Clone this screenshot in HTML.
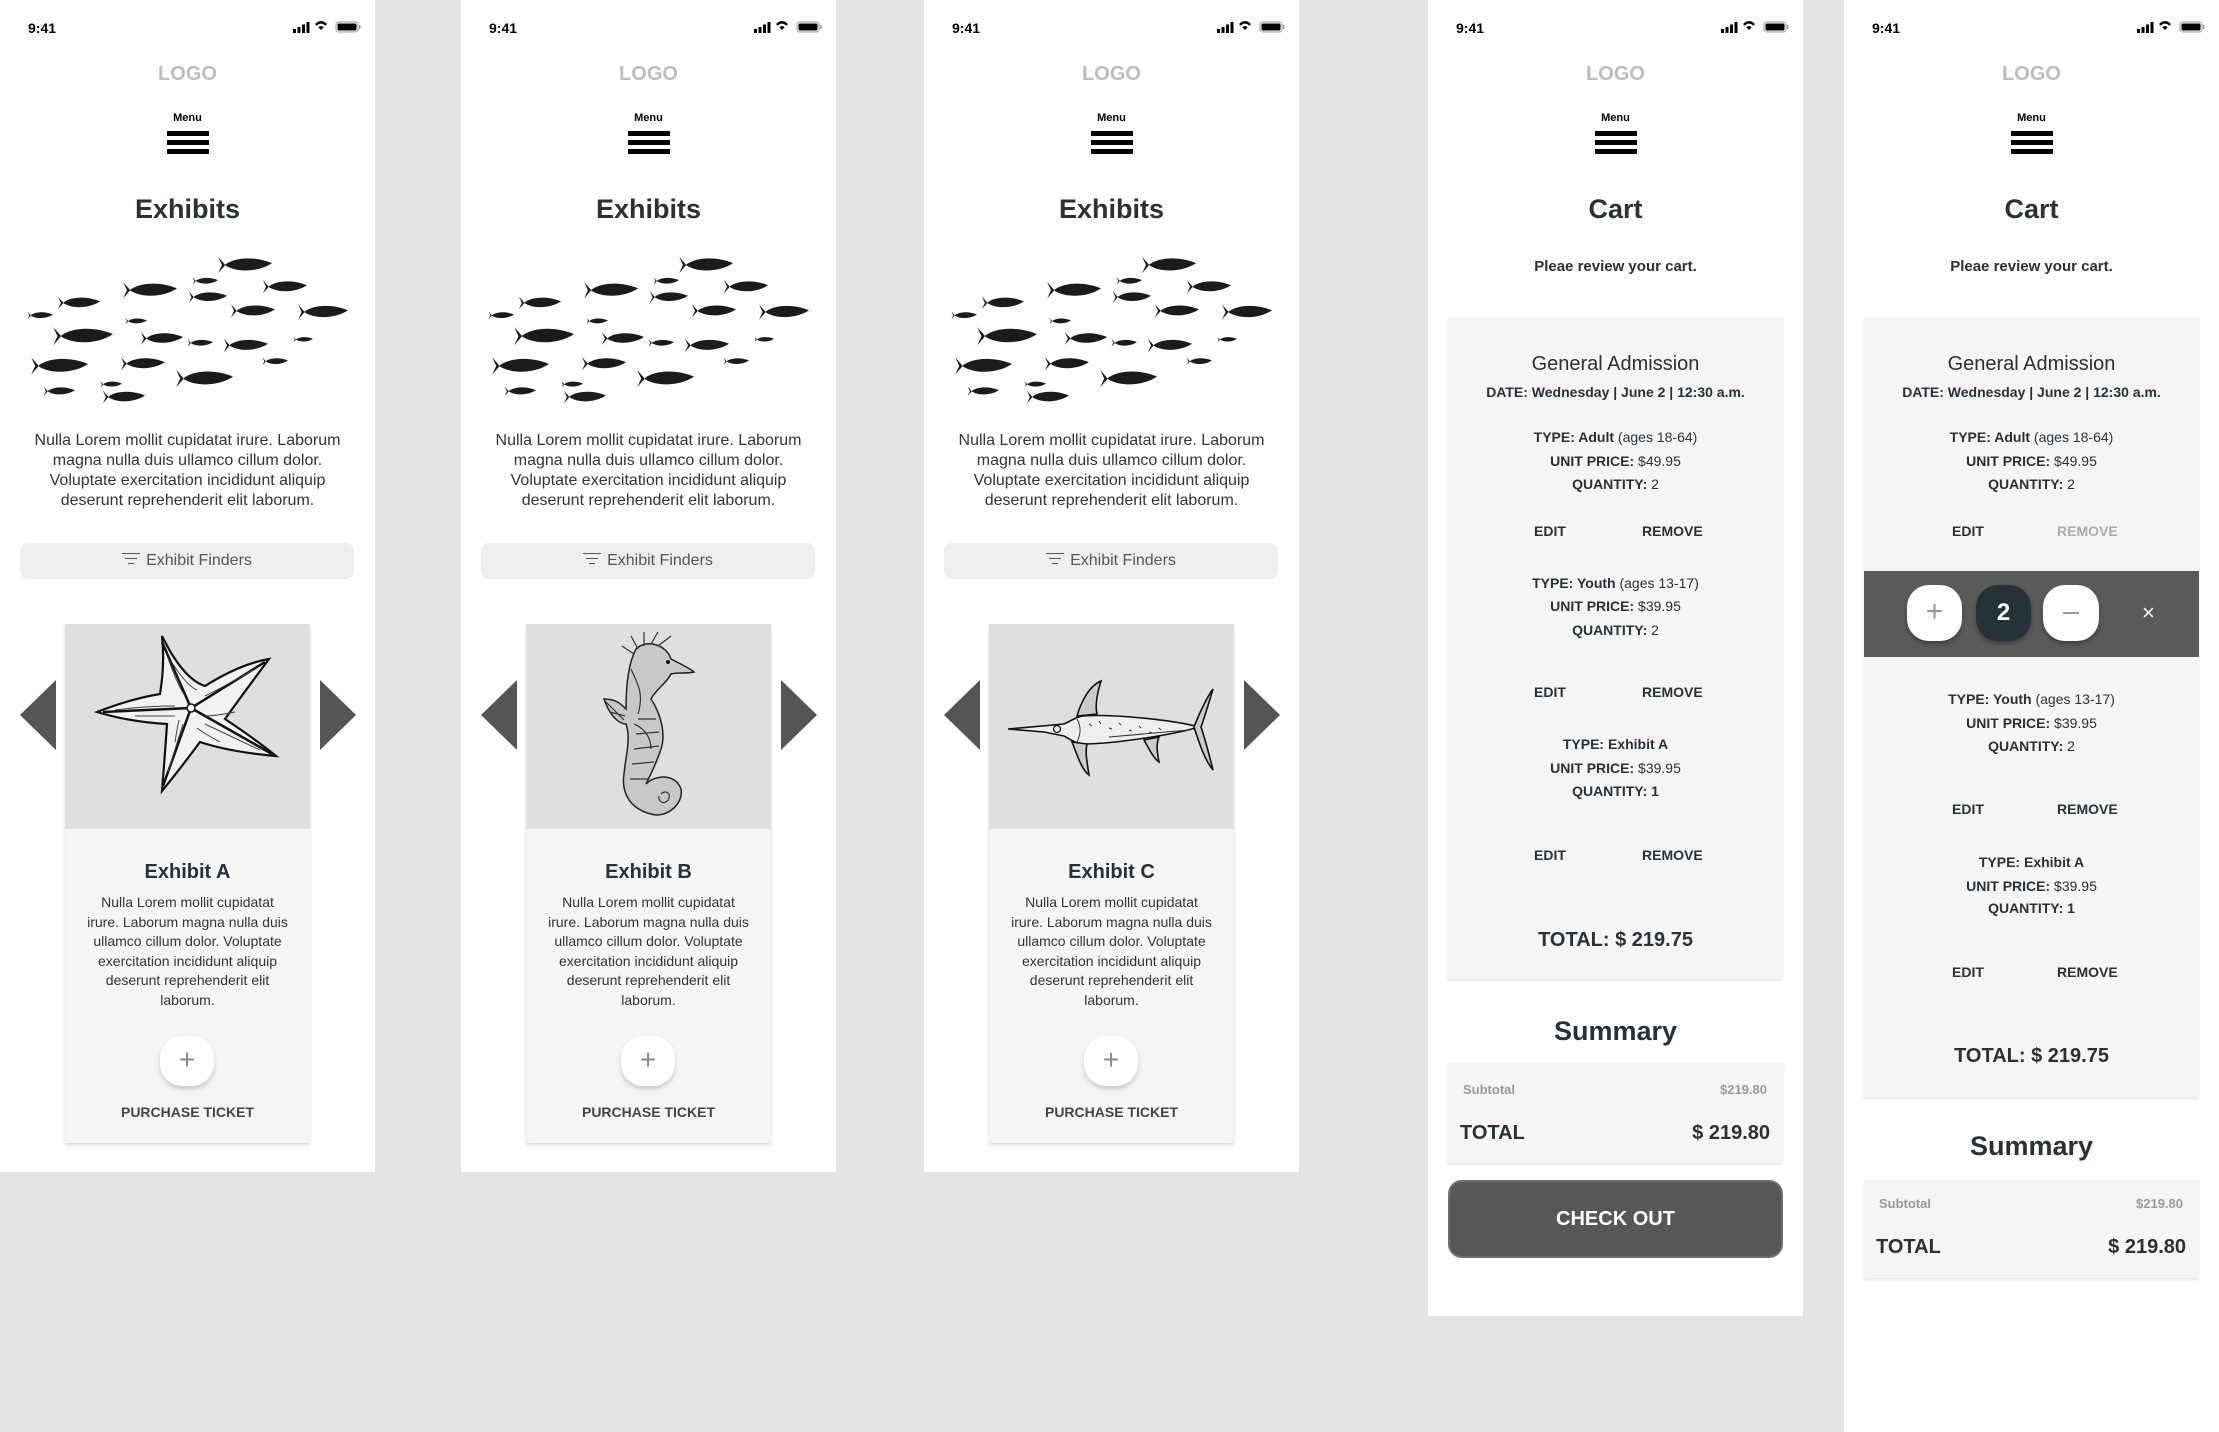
<!DOCTYPE html>
<html><head><meta charset="utf-8"><style>
*{margin:0;padding:0;box-sizing:border-box}
body{width:2219px;height:1432px;background:#e4e4e4;position:relative;overflow:hidden;font-family:"Liberation Sans",sans-serif;color:#263238}
.ph{position:absolute;top:0;width:375px;background:#fff;overflow:hidden}
.a{position:absolute}
.c{position:absolute;left:0;width:375px;text-align:center;white-space:nowrap}
.time{position:absolute;left:28px;top:20px;font-size:14px;font-weight:bold;color:#000;line-height:16px}
.logo{top:62px;font-size:20px;font-weight:bold;color:#bdbdbd;line-height:24px}
.menu{top:112px;font-size:11px;font-weight:bold;color:#000;line-height:13px}
.hb{position:absolute;left:167px;width:42px;height:5px;background:#000}
.h1{top:193px;font-size:27px;font-weight:bold;line-height:32px}
.para{top:431px;font-size:16px;line-height:20px;color:#333}
.find{position:absolute;left:20px;top:543px;width:334px;height:36px;background:#eee;border-radius:8px;font-size:16px;color:#555;text-align:center;line-height:36px}
.card{position:absolute;left:65px;top:624px;width:245px;height:519px;background:#f5f5f5;box-shadow:0 2px 3px rgba(0,0,0,.15)}
.img{position:absolute;left:0;top:0;width:245px;height:205px;background:#dfdfdf}
.ct{position:absolute;left:0;width:245px;text-align:center}
.plus{position:absolute;left:95px;top:412px;width:54px;height:50px;background:#fff;border-radius:22px;box-shadow:0 3px 5px rgba(0,0,0,.18);font-size:28px;color:#888;text-align:center;line-height:48px;font-weight:300}
.arL{position:absolute;left:20px;top:680px;width:0;height:0;border-top:35px solid transparent;border-bottom:35px solid transparent;border-right:36px solid #555}
.arR{position:absolute;left:320px;top:680px;width:0;height:0;border-top:35px solid transparent;border-bottom:35px solid transparent;border-left:36px solid #555}
.box{position:absolute;left:20px;width:335px;background:#f5f5f5;box-shadow:0 2px 3px rgba(0,0,0,.1)}
.s14{font-size:14px;line-height:18px;color:#263238}
.b{font-weight:bold}
.er{position:absolute;font-size:14px;font-weight:bold;line-height:18px;color:#263238}
</style></head><body>
<svg width="0" height="0" style="position:absolute">
<defs>
<symbol id="fish" viewBox="0 0 100 30" preserveAspectRatio="none"><path d="M14,15 C32,2 70,1 100,12 C76,26 36,28 14,15Z M15,15 L2,2 L9,15 L2,28Z" fill="#1c1a1a"/></symbol>
<symbol id="school" viewBox="0 215 375 135" preserveAspectRatio="none">
<use href="#fish" x="217" y="219.8" width="55" height="16.5"/><use href="#fish" x="192" y="238.1" width="26" height="7.8"/><use href="#fish" x="262" y="240.3" width="45" height="13.5"/><use href="#fish" x="122" y="241.8" width="55" height="16.5"/><use href="#fish" x="188" y="250.2" width="39" height="11.7"/><use href="#fish" x="57" y="254.6" width="43" height="12.9"/><use href="#fish" x="27" y="268.1" width="26" height="7.8"/><use href="#fish" x="230" y="261.3" width="45" height="13.5"/><use href="#fish" x="297" y="261.4" width="51" height="15.3"/><use href="#fish" x="125" y="273.7" width="22" height="6.6"/><use href="#fish" x="52" y="280.9" width="61" height="18.3"/><use href="#fish" x="140" y="285.6" width="43" height="12.9"/><use href="#fish" x="187" y="292.1" width="26" height="7.8"/><use href="#fish" x="223" y="291.3" width="45" height="13.5"/><use href="#fish" x="293" y="290" width="20" height="6"/><use href="#fish" x="30" y="307.3" width="58" height="17.4"/><use href="#fish" x="120" y="307.3" width="45" height="13.5"/><use href="#fish" x="262" y="308.1" width="26" height="7.8"/><use href="#fish" x="175" y="318.3" width="58" height="17.4"/><use href="#fish" x="43" y="333.2" width="32" height="9.6"/><use href="#fish" x="100" y="328.7" width="22" height="6.6"/><use href="#fish" x="102" y="336.6" width="43" height="12.9"/>
</symbol>
<symbol id="status" viewBox="0 0 72 18"><rect x="3" y="11" width="3" height="4" fill="#000"/><rect x="7.5" y="9" width="3" height="6" fill="#000"/><rect x="12" y="6.5" width="3" height="8.5" fill="#000"/><rect x="16.5" y="4" width="3" height="11" fill="#000"/><path d="M25,6 Q31,0 37,6 L35.3,7.7 Q31,3.5 26.7,7.7Z M28.3,9.3 Q31,6.6 33.7,9.3 L31,12Z" fill="#000"/><rect x="46" y="4" width="22" height="10" rx="2.5" fill="none" stroke="#999" stroke-width="1"/><rect x="47.5" y="5.5" width="19" height="7" rx="1.5" fill="#000"/><rect x="69" y="7" width="1.5" height="4" fill="#999"/></symbol>
</defs></svg>

<div class="ph" style="left:0;height:1172px">
 <div class="time">9:41</div>
 <svg class="a" style="left:290px;top:18px" width="72" height="18"><use href="#status" width="72" height="18"/></svg>
 <div class="c logo">LOGO</div><div class="c menu">Menu</div>
 <div class="hb" style="top:131px"></div><div class="hb" style="top:140px"></div><div class="hb" style="top:149px"></div>
 <div class="c h1">Exhibits</div>
 <svg class="a" style="left:0;top:250px" width="375" height="155"><use href="#school" width="375" height="155"/></svg>
 <div class="c para">Nulla Lorem mollit cupidatat irure. Laborum<br>magna nulla duis ullamco cillum dolor.<br>Voluptate exercitation incididunt aliquip<br>deserunt reprehenderit elit laborum.</div>
 <div class="find"><span style="display:inline-block;vertical-align:middle;width:18px;height:12px;position:relative;margin-right:6px;top:-2px"><i style="position:absolute;left:0;top:0;width:18px;height:1.5px;background:#555"></i><i style="position:absolute;left:3px;top:5px;width:12px;height:1.5px;background:#555"></i><i style="position:absolute;left:6px;top:10px;width:6px;height:1.5px;background:#555"></i></span>Exhibit Finders</div>
 <div class="arL"></div><div class="arR"></div>
 <div class="card"><div class="img">
  <svg width="245" height="205" viewBox="0 0 245 205"><path d="M97,12 Q118,55 140,62 Q175,40 204,35 Q178,70 160,95 Q190,115 211,132 Q165,128 135,118 Q115,145 97,167 Q100,130 102,100 Q65,98 32,88 Q65,75 95,70 Q100,40 97,12Z" fill="#f2f2f2" stroke="#111" stroke-width="2.2"/><path d="M97,18 L126,84 L200,38 M126,84 L207,130 M126,84 L98,162 M126,84 L38,88" stroke="#111" stroke-width="2.5" fill="none"/><path d="M103,34 Q112,60 120,72 M188,46 Q160,62 140,72 M195,126 Q165,112 140,100 M103,148 Q110,125 118,100 M50,86 Q80,82 110,82 M108,40 Q122,62 132,66 M170,88 Q150,92 140,92 M155,118 Q140,110 132,104 M110,118 Q112,105 114,96 M70,92 Q90,92 110,92" stroke="#444" stroke-width="1" fill="none"/><circle cx="126" cy="84" r="4" fill="#fff" stroke="#111" stroke-width="1.5"/></svg>
 </div>
  <div class="ct" style="top:236px;font-size:20px;font-weight:bold;line-height:24px">Exhibit A</div>
  <div class="ct" style="top:269px;font-size:14px;line-height:19.6px;color:#333">Nulla Lorem mollit cupidatat<br>irure. Laborum magna nulla duis<br>ullamco cillum dolor. Voluptate<br>exercitation incididunt aliquip<br>deserunt reprehenderit elit<br>laborum.</div>
  <div class="plus">+</div>
  <div class="ct" style="top:479px;font-size:14px;font-weight:bold;color:#444;line-height:18px">PURCHASE TICKET</div>
 </div>
</div>

<div class="ph" style="left:461px;height:1172px">
 <div class="time">9:41</div>
 <svg class="a" style="left:290px;top:18px" width="72" height="18"><use href="#status" width="72" height="18"/></svg>
 <div class="c logo">LOGO</div><div class="c menu">Menu</div>
 <div class="hb" style="top:131px"></div><div class="hb" style="top:140px"></div><div class="hb" style="top:149px"></div>
 <div class="c h1">Exhibits</div>
 <svg class="a" style="left:0;top:250px" width="375" height="155"><use href="#school" width="375" height="155"/></svg>
 <div class="c para">Nulla Lorem mollit cupidatat irure. Laborum<br>magna nulla duis ullamco cillum dolor.<br>Voluptate exercitation incididunt aliquip<br>deserunt reprehenderit elit laborum.</div>
 <div class="find"><span style="display:inline-block;vertical-align:middle;width:18px;height:12px;position:relative;margin-right:6px;top:-2px"><i style="position:absolute;left:0;top:0;width:18px;height:1.5px;background:#555"></i><i style="position:absolute;left:3px;top:5px;width:12px;height:1.5px;background:#555"></i><i style="position:absolute;left:6px;top:10px;width:6px;height:1.5px;background:#555"></i></span>Exhibit Finders</div>
 <div class="arL"></div><div class="arR"></div>
 <div class="card"><div class="img">
  <svg width="245" height="205" viewBox="0 0 245 205"><path d="M110,25 C120,15 140,20 145,35 C155,40 165,45 168,48 C160,50 152,48 145,50 C140,60 130,65 125,75 C135,90 140,110 135,125 C130,140 125,150 120,160 C130,150 150,150 155,165 C158,180 140,195 125,190 C105,185 95,170 98,150 C100,130 105,115 100,100 C95,100 85,95 78,75 C90,75 95,80 100,85 C100,65 102,40 110,25Z" fill="#c8c8c8" stroke="#222" stroke-width="1.5"/><path d="M105,45 C112,60 118,70 112,90 M108,100 C120,105 125,115 125,125 M112,95 L130,95 M110,110 L133,108 M108,125 L133,122 M106,140 L128,138 M104,155 L122,155 M135,170 C140,165 146,170 142,176 C138,181 132,178 133,172 M80,78 L98,96 M84,88 L99,92" stroke="#333" stroke-width="1.2" fill="none"/><path d="M112,25 L105,12 M118,22 L118,8 M125,20 L132,8 M132,22 L145,12 M108,30 L96,22" stroke="#333" stroke-width="1.2"/><circle cx="142" cy="38" r="2" fill="#111"/></svg>
 </div>
  <div class="ct" style="top:236px;font-size:20px;font-weight:bold;line-height:24px">Exhibit B</div>
  <div class="ct" style="top:269px;font-size:14px;line-height:19.6px;color:#333">Nulla Lorem mollit cupidatat<br>irure. Laborum magna nulla duis<br>ullamco cillum dolor. Voluptate<br>exercitation incididunt aliquip<br>deserunt reprehenderit elit<br>laborum.</div>
  <div class="plus">+</div>
  <div class="ct" style="top:479px;font-size:14px;font-weight:bold;color:#444;line-height:18px">PURCHASE TICKET</div>
 </div>
</div>

<div class="ph" style="left:924px;height:1172px">
 <div class="time">9:41</div>
 <svg class="a" style="left:290px;top:18px" width="72" height="18"><use href="#status" width="72" height="18"/></svg>
 <div class="c logo">LOGO</div><div class="c menu">Menu</div>
 <div class="hb" style="top:131px"></div><div class="hb" style="top:140px"></div><div class="hb" style="top:149px"></div>
 <div class="c h1">Exhibits</div>
 <svg class="a" style="left:0;top:250px" width="375" height="155"><use href="#school" width="375" height="155"/></svg>
 <div class="c para">Nulla Lorem mollit cupidatat irure. Laborum<br>magna nulla duis ullamco cillum dolor.<br>Voluptate exercitation incididunt aliquip<br>deserunt reprehenderit elit laborum.</div>
 <div class="find"><span style="display:inline-block;vertical-align:middle;width:18px;height:12px;position:relative;margin-right:6px;top:-2px"><i style="position:absolute;left:0;top:0;width:18px;height:1.5px;background:#555"></i><i style="position:absolute;left:3px;top:5px;width:12px;height:1.5px;background:#555"></i><i style="position:absolute;left:6px;top:10px;width:6px;height:1.5px;background:#555"></i></span>Exhibit Finders</div>
 <div class="arL"></div><div class="arR"></div>
 <div class="card"><div class="img">
  <svg width="245" height="205" viewBox="0 0 245 205"><path d="M19,105 L75,100 C85,95 90,92 95,92 C120,90 180,95 210,103 C180,112 120,120 95,120 C88,120 82,116 75,112 L55,108 Z" fill="#eee" stroke="#111" stroke-width="1.6"/><path d="M88,92 C92,78 100,62 112,57 C108,70 106,82 108,90Z M83,118 C88,130 92,145 100,151 C98,138 96,128 98,120Z M155,116 C160,125 165,135 170,138 C168,128 167,120 170,113Z M205,103 C212,85 220,70 224,65 C218,85 215,95 212,103 C216,115 220,130 224,146 C215,135 210,118 205,103Z" fill="#ccc" stroke="#111" stroke-width="1.6"/><circle cx="68" cy="105" r="3.5" fill="none" stroke="#111" stroke-width="1.3"/><path d="M88,95 C92,102 92,110 88,118 M100,100 l3,2 M110,97 l2,3 M120,104 l3,1 M130,99 l2,2 M140,106 l3,1 M150,102 l2,2 M160,108 l3,1 M170,104 l2,2 M120,113 L200,106" stroke="#333" stroke-width="1" fill="none"/></svg>
 </div>
  <div class="ct" style="top:236px;font-size:20px;font-weight:bold;line-height:24px">Exhibit C</div>
  <div class="ct" style="top:269px;font-size:14px;line-height:19.6px;color:#333">Nulla Lorem mollit cupidatat<br>irure. Laborum magna nulla duis<br>ullamco cillum dolor. Voluptate<br>exercitation incididunt aliquip<br>deserunt reprehenderit elit<br>laborum.</div>
  <div class="plus">+</div>
  <div class="ct" style="top:479px;font-size:14px;font-weight:bold;color:#444;line-height:18px">PURCHASE TICKET</div>
 </div>
</div>

<!-- CART 1 -->
<div class="ph" style="left:1428px;height:1316px">
 <div class="time">9:41</div>
 <svg class="a" style="left:290px;top:18px" width="72" height="18"><use href="#status" width="72" height="18"/></svg>
 <div class="c logo">LOGO</div><div class="c menu">Menu</div>
 <div class="hb" style="top:131px"></div><div class="hb" style="top:140px"></div><div class="hb" style="top:149px"></div>
 <div class="c h1">Cart</div>
 <div class="c" style="top:258px;font-size:15px;font-weight:bold;line-height:18px">Pleae review your cart.</div>
 <div class="box" style="top:317px;height:662px"></div>
 <div class="c" style="top:352px;font-size:20px;line-height:24px">General Admission</div>
 <div class="c s14 b" style="top:383px">DATE: Wednesday | June 2 | 12:30 a.m.</div>
 <div class="c s14" style="top:428px"><b>TYPE: Adult</b> (ages 18-64)</div>
 <div class="c s14" style="top:452px"><b>UNIT PRICE:</b> $49.95</div>
 <div class="c s14" style="top:475px"><b>QUANTITY:</b> 2</div>
 <div class="er" style="left:106px;top:522px">EDIT</div><div class="er" style="left:214px;top:522px">REMOVE</div>
 <div class="c s14" style="top:574px"><b>TYPE: Youth</b> (ages 13-17)</div>
 <div class="c s14" style="top:597px"><b>UNIT PRICE:</b> $39.95</div>
 <div class="c s14" style="top:621px"><b>QUANTITY:</b> 2</div>
 <div class="er" style="left:106px;top:683px">EDIT</div><div class="er" style="left:214px;top:683px">REMOVE</div>
 <div class="c s14" style="top:735px"><b>TYPE: Exhibit A</b></div>
 <div class="c s14" style="top:759px"><b>UNIT PRICE:</b> $39.95</div>
 <div class="c s14 b" style="top:782px">QUANTITY: 1</div>
 <div class="er" style="left:106px;top:846px">EDIT</div><div class="er" style="left:214px;top:846px">REMOVE</div>
 <div class="c" style="top:928px;font-size:20px;font-weight:bold;line-height:24px">TOTAL: $ 219.75</div>
 <div class="c" style="top:1015px;font-size:27px;font-weight:bold;line-height:32px">Summary</div>
 <div class="box" style="top:1063px;height:100px"></div>
 <div class="a" style="left:35px;top:1082px;font-size:13px;font-weight:bold;color:#999;line-height:16px">Subtotal</div>
 <div class="a" style="right:36px;top:1082px;font-size:13px;font-weight:bold;color:#999;line-height:16px">$219.80</div>
 <div class="a" style="left:32px;top:1121px;font-size:20px;font-weight:bold;line-height:24px">TOTAL</div>
 <div class="a" style="right:33px;top:1121px;font-size:20px;font-weight:bold;line-height:24px">$ 219.80</div>
 <div class="a" style="left:20px;top:1180px;width:335px;height:78px;background:#575757;border:2px solid #6e6e6e;border-radius:14px;color:#fff;font-size:20px;font-weight:bold;text-align:center;line-height:74px">CHECK OUT</div>
</div>

<!-- CART 2 -->
<div class="ph" style="left:1844px;height:1432px">
 <div class="time">9:41</div>
 <svg class="a" style="left:290px;top:18px" width="72" height="18"><use href="#status" width="72" height="18"/></svg>
 <div class="c logo">LOGO</div><div class="c menu">Menu</div>
 <div class="hb" style="top:131px"></div><div class="hb" style="top:140px"></div><div class="hb" style="top:149px"></div>
 <div class="c h1">Cart</div>
 <div class="c" style="top:258px;font-size:15px;font-weight:bold;line-height:18px">Pleae review your cart.</div>
 <div class="box" style="top:317px;height:780px"></div>
 <div class="c" style="top:352px;font-size:20px;line-height:24px">General Admission</div>
 <div class="c s14 b" style="top:383px">DATE: Wednesday | June 2 | 12:30 a.m.</div>
 <div class="c s14" style="top:428px"><b>TYPE: Adult</b> (ages 18-64)</div>
 <div class="c s14" style="top:452px"><b>UNIT PRICE:</b> $49.95</div>
 <div class="c s14" style="top:475px"><b>QUANTITY:</b> 2</div>
 <div class="er" style="left:108px;top:522px">EDIT</div><div class="er" style="left:213px;top:522px;color:#aaa">REMOVE</div>
 <div class="a" style="left:20px;top:571px;width:335px;height:86px;background:#5a5a5a"></div>
 <div class="a" style="left:63px;top:585px;width:55px;height:56px;background:#fff;border-radius:22px;box-shadow:0 3px 5px rgba(0,0,0,.3);text-align:center;font-size:30px;line-height:54px;color:#999;font-weight:300">+</div>
 <div class="a" style="left:132px;top:585px;width:55px;height:56px;background:#263238;border-radius:22px;box-shadow:0 3px 5px rgba(0,0,0,.3);text-align:center;font-size:24px;line-height:56px;color:#fff;font-weight:bold">2</div>
 <div class="a" style="left:199px;top:585px;width:56px;height:56px;background:#fff;border-radius:22px;box-shadow:0 3px 5px rgba(0,0,0,.3)"><i style="position:absolute;left:20px;top:27px;width:16px;height:1.5px;background:#999"></i></div>
 <div class="a" style="left:298px;top:601px;font-size:22px;line-height:24px;color:#fff">×</div>
 <div class="c s14" style="top:690px"><b>TYPE: Youth</b> (ages 13-17)</div>
 <div class="c s14" style="top:714px"><b>UNIT PRICE:</b> $39.95</div>
 <div class="c s14" style="top:737px"><b>QUANTITY:</b> 2</div>
 <div class="er" style="left:108px;top:800px">EDIT</div><div class="er" style="left:213px;top:800px">REMOVE</div>
 <div class="c s14" style="top:853px"><b>TYPE: Exhibit A</b></div>
 <div class="c s14" style="top:877px"><b>UNIT PRICE:</b> $39.95</div>
 <div class="c s14 b" style="top:899px">QUANTITY: 1</div>
 <div class="er" style="left:108px;top:963px">EDIT</div><div class="er" style="left:213px;top:963px">REMOVE</div>
 <div class="c" style="top:1044px;font-size:20px;font-weight:bold;line-height:24px">TOTAL: $ 219.75</div>
 <div class="c" style="top:1130px;font-size:27px;font-weight:bold;line-height:32px">Summary</div>
 <div class="box" style="top:1180px;height:98px"></div>
 <div class="a" style="left:35px;top:1196px;font-size:13px;font-weight:bold;color:#999;line-height:16px">Subtotal</div>
 <div class="a" style="right:36px;top:1196px;font-size:13px;font-weight:bold;color:#999;line-height:16px">$219.80</div>
 <div class="a" style="left:32px;top:1235px;font-size:20px;font-weight:bold;line-height:24px">TOTAL</div>
 <div class="a" style="right:33px;top:1235px;font-size:20px;font-weight:bold;line-height:24px">$ 219.80</div>
</div>
</body></html>
